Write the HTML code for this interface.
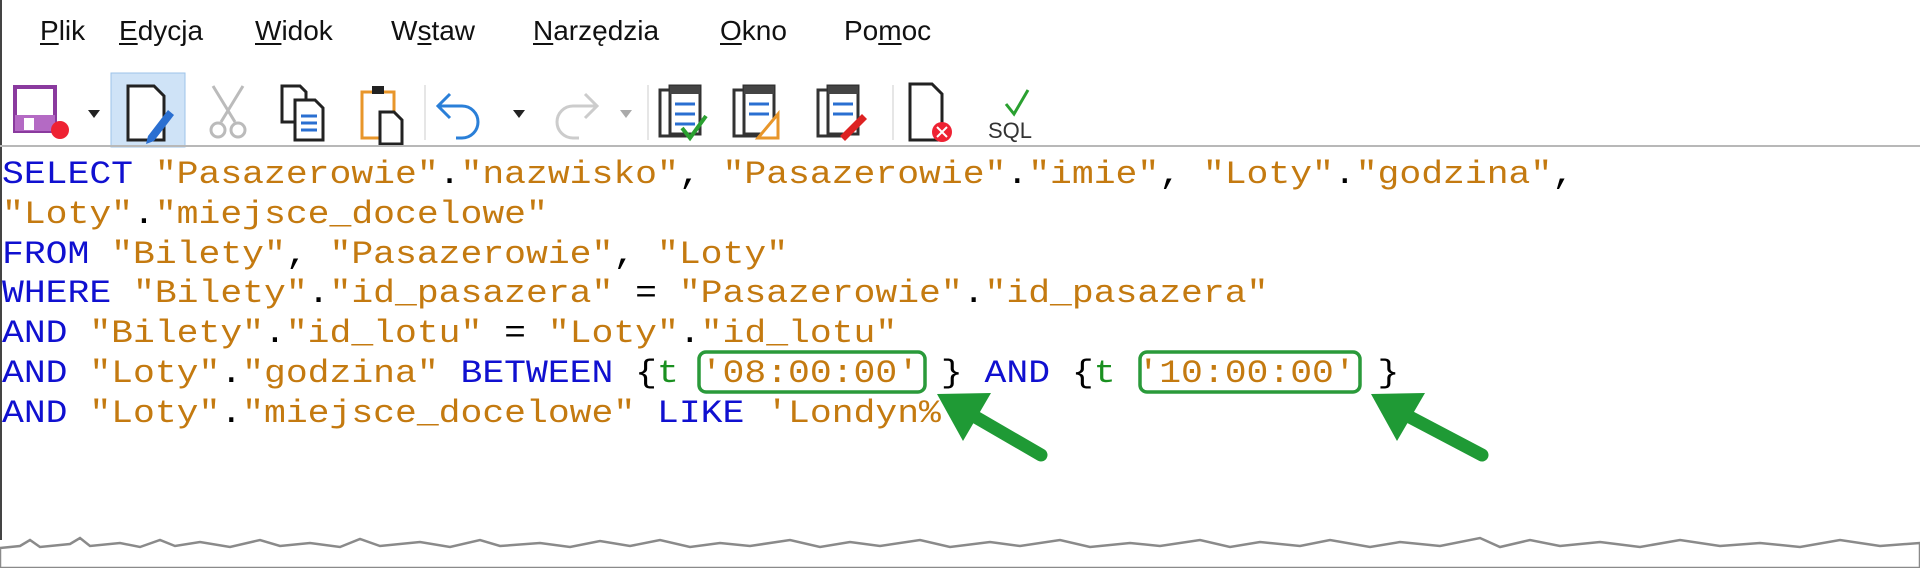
<!DOCTYPE html>
<html><head><meta charset="utf-8"><style>
html,body{margin:0;padding:0;width:1920px;height:568px;overflow:hidden;background:#fff;position:relative;font-family:"Liberation Sans",sans-serif}
.menu{position:absolute;top:15px;font-size:28px;color:#111}
.menu u{text-decoration:underline;text-underline-offset:3px}
.tb{position:absolute;left:0;top:145px;width:1920px;height:2px;background:#b8b8b8}
.lb{position:absolute;left:0;top:0;width:2px;height:540px;background:#444}
.code{position:absolute;left:2px;top:155px;font-family:"Liberation Mono",monospace;font-size:32px;line-height:39.8px;white-space:pre;color:#000;transform:scaleX(1.137);transform-origin:0 0}
.k{color:#1010d0}.s{color:#c47a10}.g{color:#1a9020}
</style></head><body>
<div class="lb"></div>
<div class="menu" style="left:40px"><u>P</u>lik</div>
<div class="menu" style="left:119px"><u>E</u>dycja</div>
<div class="menu" style="left:255px"><u>W</u>idok</div>
<div class="menu" style="left:391px">W<u>s</u>taw</div>
<div class="menu" style="left:533px"><u>N</u>arzędzia</div>
<div class="menu" style="left:720px"><u>O</u>kno</div>
<div class="menu" style="left:844px">Po<u>m</u>oc</div>

<svg style="position:absolute;left:0;top:70px" width="1100" height="80" viewBox="0 0 1100 80">
 <rect x="111" y="3" width="74" height="74" fill="#cfe3f7" stroke="#9cc3ea"/>
 <rect x="15" y="17" width="40" height="44" fill="#fff" stroke="#8a3a9e" stroke-width="4"/>
 <rect x="15" y="45" width="40" height="16" fill="#b46ac4"/>
 <rect x="24" y="48" width="10" height="12" fill="#fff"/>
 <circle cx="60" cy="60" r="9" fill="#e23"/>
 <path d="M88 40h12l-6 8z" fill="#222"/>
 <path d="M128 16h26l10 10v44h-36z" fill="#fff" stroke="#222" stroke-width="3"/>
 <path d="M148 66l20-26 6 5-20 26-8 3z" fill="#2a6fd1"/>
 <path d="M213 16l22 36M243 16l-22 36" stroke="#bbb" stroke-width="3"/>
 <circle cx="218" cy="60" r="7" fill="none" stroke="#bbb" stroke-width="3"/><circle cx="238" cy="60" r="7" fill="none" stroke="#bbb" stroke-width="3"/>
 <path d="M282 16h18l6 6v30h-24z" fill="#fff" stroke="#222" stroke-width="3"/>
 <path d="M295 30h20l8 8v32h-28z" fill="#fff" stroke="#222" stroke-width="3"/>
 <path d="M301 46h16M301 53h16M301 60h16" stroke="#2a6fd1" stroke-width="3"/>
 <rect x="362" y="22" width="32" height="46" fill="#fff" stroke="#e8962a" stroke-width="3"/>
 <rect x="372" y="16" width="12" height="8" fill="#222"/>
 <path d="M380 42h14l8 8v24h-22z" fill="#fff" stroke="#222" stroke-width="3"/>
 <line x1="425" y1="15" x2="425" y2="70" stroke="#ccc"/>
 <path d="M450 24l-12 12 12 12M438 36h24a16 16 0 0 1 0 32h-6" fill="none" stroke="#2a7fd8" stroke-width="3"/>
 <path d="M513 40h12l-6 8z" fill="#222"/>
 <path d="M585 24l12 12-12 12M597 36h-24a16 16 0 0 0 0 32h6" fill="none" stroke="#ccc" stroke-width="3"/>
 <path d="M620 40h12l-6 8z" fill="#aaa"/>
 <line x1="648" y1="15" x2="648" y2="70" stroke="#ccc"/>
 <g transform="translate(660,16)"><rect x="0" y="4" width="26" height="46" fill="#fff" stroke="#333" stroke-width="3"/><rect x="10" y="0" width="30" height="48" fill="#fff" stroke="#333" stroke-width="3"/><rect x="10" y="0" width="30" height="8" fill="#444"/><path d="M15 18h20M15 28h20M15 38h20" stroke="#2a6fd1" stroke-width="3"/><path d="M22 42l8 10 16-22" fill="none" stroke="#2aa030" stroke-width="4"/></g>
 <g transform="translate(734,16)"><rect x="0" y="4" width="26" height="46" fill="#fff" stroke="#333" stroke-width="3"/><rect x="10" y="0" width="30" height="48" fill="#fff" stroke="#333" stroke-width="3"/><rect x="10" y="0" width="30" height="8" fill="#444"/><path d="M15 18h20M15 28h20" stroke="#2a6fd1" stroke-width="3"/><path d="M24 52l20-24v24z" fill="#fff" stroke="#e8962a" stroke-width="3"/></g>
 <g transform="translate(818,16)"><rect x="0" y="4" width="26" height="46" fill="#fff" stroke="#333" stroke-width="3"/><rect x="10" y="0" width="30" height="48" fill="#fff" stroke="#333" stroke-width="3"/><rect x="10" y="0" width="30" height="8" fill="#444"/><path d="M15 18h20M15 28h20" stroke="#2a6fd1" stroke-width="3"/><path d="M22 50l22-22 5 5-22 22z" fill="#d22"/></g>
 <line x1="893" y1="15" x2="893" y2="70" stroke="#ccc"/>
 <path d="M910 14h22l10 10v46h-32z" fill="#fff" stroke="#222" stroke-width="3"/>
 <circle cx="942" cy="62" r="10" fill="#e23"/><path d="M937 57l10 10M947 57l-10 10" stroke="#fff" stroke-width="2"/>
 <text x="988" y="68" font-family="Liberation Sans" font-size="22" fill="#333">SQL</text>
 <path d="M1006 34l8 10 14-24" fill="none" stroke="#2aa030" stroke-width="3"/>
</svg>
<div class="tb"></div>

<div class="code"><span class="k">SELECT</span> <span class="s">"Pasazerowie"</span>.<span class="s">"nazwisko"</span>, <span class="s">"Pasazerowie"</span>.<span class="s">"imie"</span>, <span class="s">"Loty"</span>.<span class="s">"godzina"</span>,
<span class="s">"Loty"</span>.<span class="s">"miejsce_docelowe"</span>
<span class="k">FROM</span> <span class="s">"Bilety"</span>, <span class="s">"Pasazerowie"</span>, <span class="s">"Loty"</span>
<span class="k">WHERE</span> <span class="s">"Bilety"</span>.<span class="s">"id_pasazera"</span> = <span class="s">"Pasazerowie"</span>.<span class="s">"id_pasazera"</span>
<span class="k">AND</span> <span class="s">"Bilety"</span>.<span class="s">"id_lotu"</span> = <span class="s">"Loty"</span>.<span class="s">"id_lotu"</span>
<span class="k">AND</span> <span class="s">"Loty"</span>.<span class="s">"godzina"</span> <span class="k">BETWEEN</span> {<span class="g">t</span> <span class="s">'08:00:00'</span> } <span class="k">AND</span> {<span class="g">t</span> <span class="s">'10:00:00'</span> }
<span class="k">AND</span> <span class="s">"Loty"</span>.<span class="s">"miejsce_docelowe"</span> <span class="k">LIKE</span> <span class="s">'Londyn%'</span></div>

<svg style="position:absolute;left:0;top:0" width="1920" height="568">
 <rect x="699" y="352" width="226" height="40" rx="7" fill="none" stroke="#2a9a3a" stroke-width="3.5"/>
 <rect x="1140" y="352" width="220" height="40" rx="7" fill="none" stroke="#2a9a3a" stroke-width="3.5"/>
 <line x1="972" y1="415" x2="1041" y2="455" stroke="#1f9a35" stroke-width="13" stroke-linecap="round"/>
 <path d="M937 394L963 441L991 393z" fill="#1f9a35"/>
 <line x1="1406" y1="415" x2="1482" y2="455" stroke="#1f9a35" stroke-width="13" stroke-linecap="round"/>
 <path d="M1371 394L1397 441L1425 393z" fill="#1f9a35"/>
 <path d="M0 548 L20 546 30 540 40 547 70 544 80 538 90 546 120 543 140 547 160 540 175 546 200 542 230 547 260 540 280 546 310 543 340 547 360 539 380 546 420 542 450 547 480 540 500 546 540 543 570 547 600 541 630 546 660 540 690 547 720 543 750 546 790 540 820 547 850 542 880 546 920 540 950 547 990 542 1020 546 1060 540 1090 547 1130 543 1160 546 1200 540 1230 547 1260 542 1300 546 1330 540 1370 547 1400 542 1440 546 1480 538 1500 547 1530 540 1560 546 1600 542 1640 547 1680 540 1720 546 1760 543 1800 547 1840 540 1880 546 1920 543 L1920 568 0 568z" fill="#fff" stroke="#8a8a8a" stroke-width="2.5"/>
</svg>
</body></html>
